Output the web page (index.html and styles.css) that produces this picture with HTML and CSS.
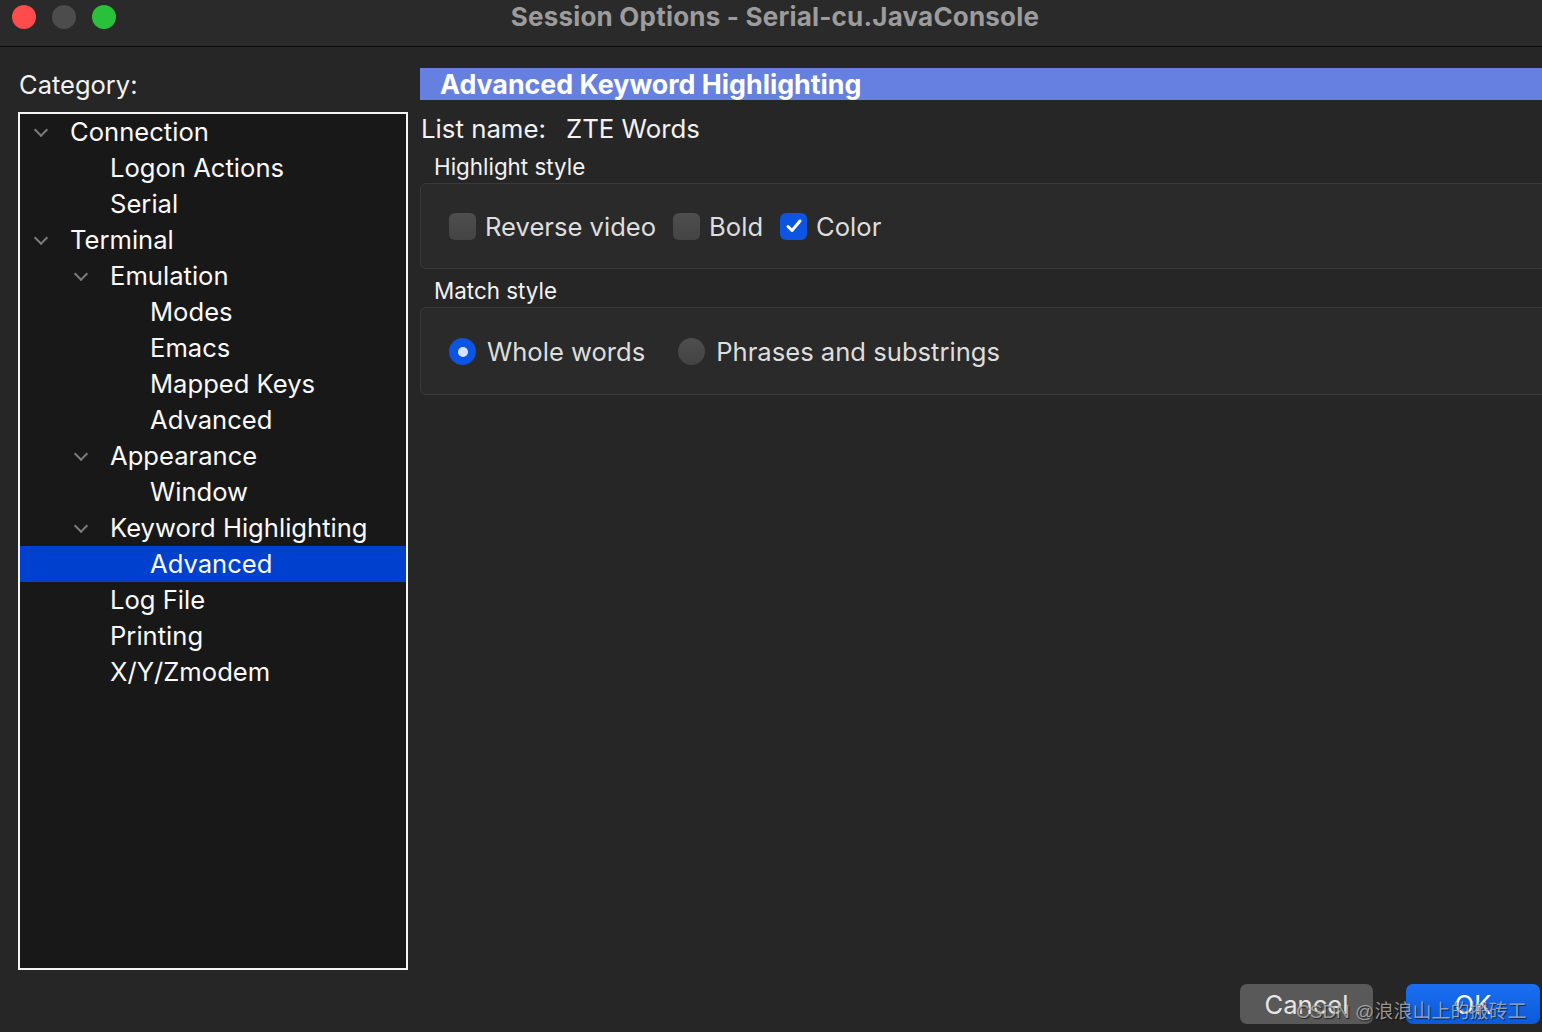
FILE: index.html
```html
<!DOCTYPE html>
<html lang="en">

<head>
  <meta charset="UTF-8">
  <meta name="viewport" content="width=device-width, initial-scale=1.0">
  <title>Session Options</title>
  <link rel="stylesheet" href="styles.css">
</head>

<body>
  <div class="titlebar">
    <div class="lights">
      <span class="light red"></span>
      <span class="light gray"></span>
      <span class="light green"></span>
    </div>
    <div class="title">Session Options - Serial-cu.JavaConsole</div>
  </div>

  <div class="main">
    <div class="left">
      <div class="cat_label">Category:</div>
      <ul class="tree">
        <li class="lv0"><i class="chev"></i>Connection</li>
        <li class="lv1">Logon Actions</li>
        <li class="lv1">Serial</li>
        <li class="lv0"><i class="chev"></i>Terminal</li>
        <li class="lv1"><i class="chev"></i>Emulation</li>
        <li class="lv2">Modes</li>
        <li class="lv2">Emacs</li>
        <li class="lv2">Mapped Keys</li>
        <li class="lv2">Advanced</li>
        <li class="lv1"><i class="chev"></i>Appearance</li>
        <li class="lv2">Window</li>
        <li class="lv1"><i class="chev"></i>Keyword Highlighting</li>
        <li class="lv2 selected">Advanced</li>
        <li class="lv1">Log File</li>
        <li class="lv1">Printing</li>
        <li class="lv1">X/Y/Zmodem</li>
      </ul>
    </div>

    <div class="right">
      <div class="panel_head">Advanced Keyword Highlighting</div>
      <div class="list_name"><span>List name:</span><span>ZTE Words</span></div>

      <div class="group_label">Highlight style</div>
      <div class="group">
        <label class="opt"><span class="check"></span>Reverse video</label>
        <label class="opt"><span class="check"></span>Bold</label>
        <label class="opt"><span class="check on">
            <svg width="18" height="16" viewBox="0 0 18 16"><path d="M3 8.5 L7 12.5 L15 3" fill="none" stroke="#fff" stroke-width="3" stroke-linecap="round" stroke-linejoin="round"/></svg>
          </span>Color</label>
      </div>

      <div class="group_label match">Match style</div>
      <div class="group tall">
        <label class="opt radio_opt"><span class="radio on"></span>Whole words</label>
        <label class="opt radio_opt"><span class="radio"></span>Phrases and substrings</label>
      </div>

      <div class="buttons">
        <button class="btn cancel">Cancel</button>
        <button class="btn ok">OK</button>
      </div>
    </div>
  </div>

  <div class="watermark">CSDN @浪浪山上的搬砖工</div>
</body>

</html>
```

FILE: styles.css
```css
* {
  margin: 0;
  padding: 0;
  box-sizing: border-box;
}

html,
body {
  width: 1542px;
  height: 1032px;
  overflow: hidden;
}

body {
  position: relative;
  background-color: #262626;
  color: #f2f2f2;
  font-family: Inter, "Noto Sans", "Liberation Sans", "Noto Sans CJK SC", sans-serif;
}

.titlebar {
  position: relative;
  height: 47px;
  background-color: #2a2a2a;
  border-bottom: 1px solid #0c0c0c;
  display: flex;
  align-items: flex-start;
  justify-content: center;
}

.lights {
  position: absolute;
  left: 12px;
  top: 5px;
  display: flex;
  gap: 16px;
}

.light {
  width: 24px;
  height: 24px;
  border-radius: 50%;
}

.red {
  background-color: #fe4b4b;
}

.gray {
  background-color: #4c4c4c;
}

.green {
  background-color: #29c13a;
}

.title {
  margin-top: 1px;
  margin-left: 8px;
  font-size: 26px;
  font-weight: 700;
  color: #9c9c9c;
  line-height: 32px;
  letter-spacing: 0.2px;
}

.main {
  display: flex;
  gap: 12px;
  height: 985px;
  padding: 21px 0 0 18px;
}

.left {
  width: 390px;
}

.cat_label {
  height: 32px;
  line-height: 32px;
  margin: 1px 0 11px 1px;
  font-size: 25.5px;
}

ul {
  list-style: none;
}

.tree {
  height: 858px;
  border: 2px solid #f4f4f4;
  background-color: #181818;
}

.tree li {
  position: relative;
  height: 36px;
  line-height: 36px;
  font-size: 25.6px;
  color: #fafafa;
  white-space: nowrap;
}

.tree .lv0 {
  padding-left: 50px;
}

.tree .lv1 {
  padding-left: 90px;
}

.tree .lv2 {
  padding-left: 130px;
}

.tree .selected {
  background-color: #0040cf;
}

.chev {
  position: absolute;
  top: 11px;
  width: 10px;
  height: 10px;
  border-right: 2px solid #7c7c7c;
  border-bottom: 2px solid #7c7c7c;
  transform: rotate(45deg);
}

.lv0 .chev {
  left: 16px;
}

.lv1 .chev {
  left: 56px;
}

.right {
  flex: 1;
  display: flex;
  flex-direction: column;
  padding-bottom: 8px;
}

.panel_head {
  height: 32px;
  line-height: 32px;
  padding-left: 20px;
  background-color: #6680e1;
  color: #fff;
  font-size: 26.8px;
  font-weight: 700;
}

.list_name {
  display: flex;
  gap: 20px;
  height: 34px;
  line-height: 34px;
  margin-top: 12px;
  padding-left: 1px;
  font-size: 25.8px;
}

.group_label {
  height: 28px;
  line-height: 28px;
  margin-top: 7px;
  padding-left: 14px;
  font-size: 22.4px;
}

.group_label.match {
  margin-top: 8px;
}

.group {
  display: flex;
  align-items: center;
  height: 86px;
  margin-top: 2px;
  margin-right: -8px;
  padding-left: 28px;
  background-color: #2a2a2a;
  border: 1px solid #3a3a3a;
  border-radius: 6px;
  font-size: 25.6px;
  color: #dedede;
}

.group.tall {
  height: 88px;
}

.opt {
  display: flex;
  align-items: center;
  margin-right: 17px;
}

.check {
  display: flex;
  align-items: center;
  justify-content: center;
  width: 27px;
  height: 27px;
  margin-right: 9px;
  border-radius: 6px;
  background: linear-gradient(#4e4e4e, #444);
}

.check.on {
  background: #0b55e2;
}

.radio_opt {
  margin-right: 33px;
}

.radio {
  width: 27px;
  height: 27px;
  margin-right: 11px;
  border-radius: 50%;
  background: linear-gradient(#4e4e4e, #434343);
}

.radio.on {
  background: #0b55e2;
  position: relative;
}

.radio.on::after {
  content: "";
  position: absolute;
  left: 9px;
  top: 9px;
  width: 10px;
  height: 10px;
  border-radius: 50%;
  background-color: #d6e4ff;
}

.buttons {
  margin-top: auto;
  display: flex;
  justify-content: flex-end;
  gap: 33px;
  padding-right: 2px;
}

.btn {
  height: 40px;
  border: none;
  border-radius: 7px;
  font-family: inherit;
  font-size: 25.6px;
  color: #fff;
}

.cancel {
  width: 133px;
  background-color: #595959;
  color: #e6e6e6;
}

.ok {
  width: 134px;
  background: linear-gradient(#1b6ff2, #0a5ad9);
}

.watermark {
  position: absolute;
  left: 1296px;
  top: 999px;
  font-size: 19px;
  line-height: 26px;
  color: rgba(190, 190, 190, 0.75);
  text-shadow: 1px 1px 1px rgba(0, 0, 0, 0.6);
  font-family: "Liberation Sans", "Noto Sans CJK SC", sans-serif;
  white-space: nowrap;
}
```
